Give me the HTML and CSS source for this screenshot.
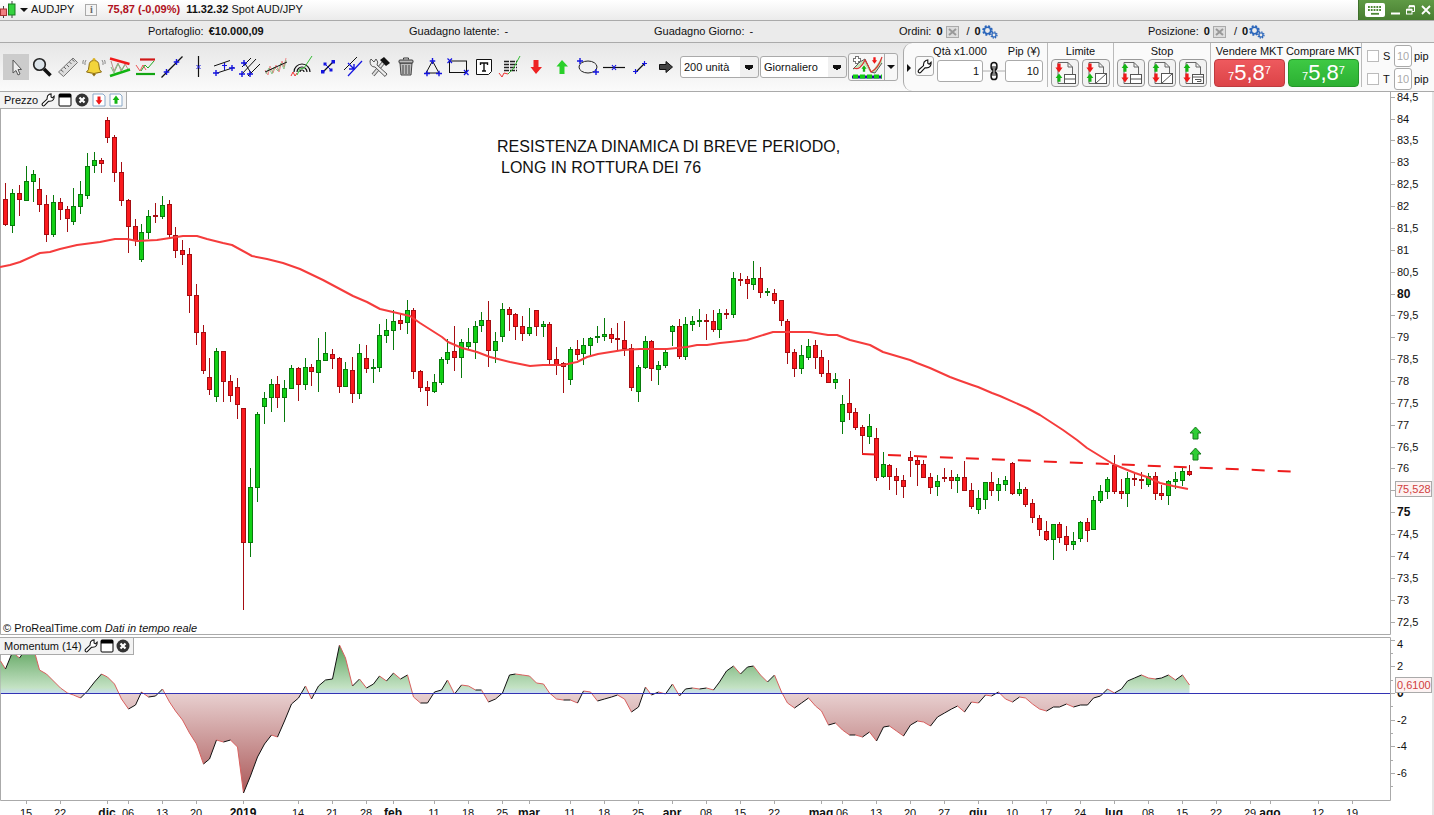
FILE: index.html
```html
<!DOCTYPE html>
<html lang="it">
<head>
<meta charset="utf-8">
<title>AUDJPY - Spot AUD/JPY</title>
<link rel="stylesheet" href="styles.css">
</head>
<body>
<svg class="defs" aria-hidden="true">
  <symbol id="wrench" viewBox="0 0 16 16"><path d="M2 14.5Q.5 13 2 11.500L7 7Q6.500 3 9.500 1.500L11.500 1V4.500L13 5.500L15 3.500Q15.500 9 10 9.500L8.500 9.500L4 14.200Q3 15.200 2 14.500Z" fill="#fff" stroke="#111" stroke-width="1.200"/></symbol>
  <symbol id="window" viewBox="0 0 14 14"><rect x="1" y="1" width="12" height="12" rx="1" fill="#fff" stroke="#000"/><path d="M1 1H13V4.500H1Z"/></symbol>
  <symbol id="close" viewBox="0 0 14 14"><circle cx="7" cy="7" r="6.500" fill="#333"/><path d="M4.500 4.500L9.500 9.500M9.500 4.500L4.500 9.500" stroke="#fff" stroke-width="2.200"/></symbol>
  <symbol id="gears" viewBox="0 0 16 14"><circle cx="5.500" cy="5.500" r="4.300" fill="none" stroke="#2b66bb" stroke-width="2" stroke-dasharray="1.900 1.500"/><circle cx="5.500" cy="5.500" r="3.200" fill="none" stroke="#2b66bb" stroke-width="1.600"/><circle cx="12" cy="10" r="3" fill="none" stroke="#2b66bb" stroke-width="1.300" stroke-dasharray="1.300 1.050"/><circle cx="12" cy="10" r="2" fill="none" stroke="#2b66bb" stroke-width="1.200"/></symbol>
  <symbol id="cancel" viewBox="0 0 13 12"><rect x=".5" y=".5" width="12" height="11" fill="#ddd" stroke="#aaa"/><path d="M3 3L10 9M10 3L3 9" stroke="#999" stroke-width="2"/></symbol>
  <symbol id="red-down" viewBox="0 0 10 12"><path d="M3 .5H7V5.500H9.500L5 11.500L.5 5.500H3Z" fill="#f01818"/></symbol>
  <symbol id="green-up" viewBox="0 0 10 12"><path d="M3 11.500H7V6.500H9.500L5 .5L.5 6.500H3Z" fill="#13b513"/></symbol>
  <symbol id="plus" viewBox="0 0 6 6"><path d="M3 0V6M0 3H6" stroke="#1414e0" stroke-width="1.400"/></symbol>
  <symbol id="page" viewBox="0 0 24 24"><path d="M5 1.500H15L19.500 6V22.500H5Z" fill="#f6f6f6" stroke="#666"/><path d="M15 1.500V6H19.500" fill="none" stroke="#666"/></symbol>
</svg>

<header class="titlebar">
  <svg class="logo" viewBox="0 0 17 20"><path d="M3.500 6V18M12 1V18" stroke="#444"/><rect x=".5" y="9" width="6" height="6.500" fill="#f08080" stroke="#a33"/><rect x="8.500" y="4" width="6.500" height="11" fill="#35d23f" stroke="#187a20"/></svg>
  <button class="caret" aria-label="Scegli strumento"></button>
  <span class="symbol">AUDJPY</span>
  <button class="info" aria-label="Informazioni">i</button>
  <b class="quote">75,87 (-0,09%)</b>
  <b class="clock">11.32.32</b>
  <span>Spot AUD/JPY</span>
  <div class="window-controls">
    <button aria-label="Tastiera"><svg width="20" height="14" viewBox="0 0 20 14"><rect width="20" height="14" rx="2" fill="#fff"/><path d="M3 4H17M3 7H17" stroke="#4e8735" stroke-width="1.800" stroke-dasharray="1.800 1"/><path d="M6 10.800H14" stroke="#4e8735" stroke-width="1.800"/></svg></button>
    <button aria-label="Riduci"><svg width="9" height="10" viewBox="0 0 9 10"><path d="M0 8.500H9" stroke="#fff" stroke-width="2"/></svg></button>
    <button aria-label="Ripristina"><svg width="9" height="10" viewBox="0 0 9 10"><path d="M3 3.500V1H8.500V6.500H6" fill="none" stroke="#fff"/><path d="M3 1.200H8.500" stroke="#fff" stroke-width="2"/><rect x=".5" y="4.500" width="5.500" height="4.500" fill="none" stroke="#fff"/><path d="M.5 4.700H6" stroke="#fff" stroke-width="2"/></svg></button>
    <button aria-label="Chiudi"><svg width="10" height="10" viewBox="0 0 10 10"><path d="M1 1L9 9M9 1L1 9" stroke="#fff" stroke-width="1.800"/></svg></button>
  </div>
</header>

<section class="status">
  <p>Portafoglio: <b>€10.000,09</b></p>
  <p>Guadagno latente: <span>-</span></p>
  <p>Guadagno Giorno: <span>-</span></p>
  <p>Ordini: <b>0</b><svg class="i-cancel"><use href="#cancel"/></svg> <span class="slash">/</span> <b>0</b><svg class="i-gears"><use href="#gears"/></svg></p>
  <p>Posizione: <b>0</b><svg class="i-cancel"><use href="#cancel"/></svg> <span class="slash">/</span> <b>0</b><svg class="i-gears"><use href="#gears"/></svg></p>
</section>

<nav class="toolbar">
  <div class="tools">
    <button class="active" aria-label="Cursore"><svg viewBox="0 0 24 24"><path d="M9 5V18L12 15.500L14 20L16 19L14 14.500H17.500Z" fill="#eee" stroke="#555"/></svg></button>
    <button aria-label="Zoom"><svg viewBox="0 0 24 24"><path d="M14 14L20.500 20.500" stroke="#111" stroke-width="3.500"/><circle cx="9.500" cy="9.500" r="5.800" fill="#dce4ea" stroke="#222" stroke-width="1.600"/></svg></button>
    <button aria-label="Righello"><svg viewBox="0 0 24 24"><path d="M2.500 17L17 3L21.500 7.500L7.500 21.500Z" fill="#ddd" stroke="#777"/><path d="M5 15L7.500 17M8 12L10 14M10.500 9.500L13 12M13.500 7L15.500 9M16 4.500L18.500 6.500" stroke="#666"/></svg></button>
    <button aria-label="Allarme"><svg viewBox="0 0 24 24"><path d="M4.500 17Q7 15.500 7 11Q7 5.500 12 5.500T17 11Q17 15.500 19.500 17Q12 20 4.500 17Z" fill="#f3d43a" stroke="#8a6a10"/><circle cx="12" cy="4.500" r="1.500" fill="#d9b020"/><path d="M10 19H14L12 21.500Z" fill="#8a6a10"/><path d="M4 5Q2.500 7 3 10M1.500 5Q.5 7 1 9M20 5Q21.500 7 21 10M22.500 5Q23.500 7 23 9" fill="none" stroke="#888"/></svg></button>
    <button aria-label="Triangoli"><svg viewBox="0 0 24 24"><path d="M3 6L6 16L10 8L13 16L17 9L20 14" fill="none" stroke="#b88"/><path d="M3 12L6 18L10 9L14 15L17 10" fill="none" stroke="#7b7"/><path d="M2 3.500L21.500 9" stroke="#f01818" stroke-width="2.400"/><path d="M2 21L22 14.500" stroke="#12b512" stroke-width="2.400"/></svg></button>
    <button aria-label="Supporti e resistenze"><svg viewBox="0 0 24 24"><path d="M2 10L6 16L9 10L12 15" fill="none" stroke="#e55"/><path d="M7 16L11 10L14 13L20 6" fill="none" stroke="#2a2"/><path d="M6 4.500H21" stroke="#d01818" stroke-width="2.200"/><path d="M2 19H21" stroke="#12a512" stroke-width="2.200"/></svg></button>
    <button aria-label="Retta"><svg viewBox="0 0 24 24"><path d="M1.500 22.500L22.500 1.500" stroke="#111" stroke-width="1.200"/><use href="#plus" x="3.500" y="14" width="6" height="6"/><use href="#plus" x="13.500" y="4" width="6" height="6"/></svg></button>
    <button aria-label="Linea verticale"><svg viewBox="0 0 24 24"><path d="M12.500 1V22" stroke="#111" stroke-width="1.200"/><path d="M10.500 10L14.500 14M14.500 10L10.500 14" stroke="#1414e0"/></svg></button>
    <button aria-label="Canale"><svg viewBox="0 0 24 24"><path d="M2 11L18 5.500M5 18L22 12.500" stroke="#111"/><path d="M12.500 9V15" stroke="#1414e0"/><use href="#plus" x="1" y="15" width="6" height="6"/><use href="#plus" x="17" y="10" width="6" height="6"/><use href="#plus" x="10" y="8" width="5" height="5"/></svg></button>
    <button aria-label="Forchetta"><svg viewBox="0 0 24 24"><path d="M4 12L13 3M3 20L18 4M10 21L22 9M6 7L13 18" stroke="#111"/><use href="#plus" x="3" y="5" width="6" height="6"/><use href="#plus" x="1" y="16" width="6" height="6"/><use href="#plus" x="9" y="16" width="6" height="6"/></svg></button>
    <button aria-label="Regressione"><svg viewBox="0 0 24 24"><path d="M1 15L4 20L6 11L9 18L12 10L15 17L18 6L20 12L22 3" fill="none" stroke="#e88"/><path d="M2 19L5 13L8 19L10 12L14 16L17 8L20 14L22 5" fill="none" stroke="#7b7" stroke-width=".8"/><path d="M1 17L23 7" stroke="#111"/></svg></button>
    <button aria-label="Archi"><svg viewBox="0 0 24 24"><path d="M4 17A8 8 0 0 1 20 17M7 17A5 5 0 0 1 17 17M10 17A2 2 0 0 1 14 17" fill="none" stroke="#111" stroke-width="1.200"/><path d="M1 21L3 17L5 21L7 18" fill="none" stroke="#e33"/><path d="M7 20L10 14L14 13L22 1" fill="none" stroke="#3b3"/></svg></button>
    <button aria-label="Segmento"><svg viewBox="0 0 24 24"><path d="M7 17L17 7" stroke="#111" stroke-width="1.200"/><path d="M9 9L15 15" stroke="#1414e0"/><rect x="5" y="15" width="3.500" height="3.500" fill="#1414e0"/><rect x="15.500" y="5" width="3.500" height="3.500" fill="#1414e0"/><rect x="7.500" y="7.500" width="3" height="3" fill="#1414e0"/><rect x="13.500" y="13.500" width="3" height="3" fill="#1414e0"/></svg></button>
    <button aria-label="Parallele"><svg viewBox="0 0 24 24"><path d="M2 15L15 2" stroke="#111"/><path d="M6 21L20 6" stroke="#1414e0" stroke-width="1.200"/><path d="M6 8L12 14M12 9V14H7" fill="none" stroke="#1414e0" stroke-width="1.400"/></svg></button>
    <button aria-label="Strumenti"><svg viewBox="0 0 24 24"><path d="M5 20L16 7" stroke="#555" stroke-width="3.600"/><path d="M5 20L16 7" stroke="#ddd" stroke-width="2"/><path d="M12 5L16 2L22 8L18 11Z" fill="#111"/><path d="M3 4L6 7L8 4Q11 7 9 10L19 19L17 21.500L7 12Q2 12 2 6Z" fill="#eee" stroke="#555"/></svg></button>
    <button aria-label="Elimina"><svg viewBox="0 0 24 24"><path d="M6 8H18L17 20H7Z" fill="#bbb" stroke="#444"/><path d="M9 10V19M12 10V19M15 10V19" stroke="#444"/><rect x="5" y="5" width="14" height="3" rx="1" fill="#bbb" stroke="#333"/><path d="M9.500 4.500V3H14.500V4.500" fill="none" stroke="#333"/></svg></button>
    <button aria-label="Triangolo"><svg viewBox="0 0 24 24"><path d="M12.500 6L6 18H19Z" fill="none" stroke="#111"/><use href="#plus" x="9.500" y="3" width="6" height="6"/><use href="#plus" x="4" y="15.500" width="6" height="6"/><use href="#plus" x="16" y="15.500" width="6" height="6"/></svg></button>
    <button aria-label="Rettangolo"><svg viewBox="0 0 24 24"><rect x="3.500" y="6" width="17" height="11.500" fill="none" stroke="#111"/><path d="M1.500 3.500L6 8M6 3.500L1.500 8M18 15L22.500 20M22.500 15L18 20" stroke="#1414e0" stroke-width="1.200"/></svg></button>
    <button aria-label="Testo"><svg viewBox="0 0 24 24"><path d="M4.500 4.500H19.500V16.500L16.500 19.500H4.500Z" fill="#fff" stroke="#111"/><path d="M8.500 10V8H15.500V10M12 8V16M10 16H14" fill="none" stroke="#111" stroke-width="1.400"/></svg></button>
    <button aria-label="Annotazioni"><svg viewBox="0 0 24 24"><path d="M6 6.500H19M6 9.500H19M6 12.500H19M6 15.500H19" stroke="#222" stroke-width="1.300" stroke-dasharray="5 1"/><path d="M1 18L4 22L6 18L10 19" fill="none" stroke="#e33"/><path d="M10 19L15 14L22 1" fill="none" stroke="#3b3"/></svg></button>
    <button aria-label="Freccia rossa"><svg viewBox="0 0 24 24"><path d="M9.500 5H14.500V12H18L12 19L6.500 12H9.500Z" fill="#ee2222"/></svg></button>
    <button aria-label="Freccia verde"><svg viewBox="0 0 24 24"><path d="M9.500 19H14.500V11.500H18L12 5L6.500 11.500H9.500Z" fill="#2ad02a"/></svg></button>
    <button aria-label="Ellisse"><svg viewBox="0 0 24 24"><ellipse cx="12" cy="12" rx="9" ry="6" fill="none" stroke="#222"/><use href="#plus" x="1" y="3" width="6" height="6"/><use href="#plus" x="17" y="14" width="6" height="6"/></svg></button>
    <button aria-label="Linea orizzontale"><svg viewBox="0 0 24 24"><path d="M1 12.500H23" stroke="#111" stroke-width="1.200"/><path d="M10 10L14 15M14 10L10 15" stroke="#1414e0" stroke-width="1.200"/></svg></button>
    <button aria-label="Tratto"><svg viewBox="0 0 24 24"><path d="M8 17L17 8" stroke="#111" stroke-width="1.200"/><use href="#plus" x="5" y="14" width="5" height="5"/><use href="#plus" x="14" y="6" width="5" height="5"/></svg></button>
    <button aria-label="Avanti"><svg viewBox="0 0 24 24"><path d="M5.500 9.500H12V6.500L18.500 12L12 17.500V14.500H5.500Z" fill="#444" stroke="#111"/></svg></button>
  </div>
  <div class="pickers">
    <select class="units" aria-label="Numero di unità"><option>200 unità</option></select>
    <select class="period" aria-label="Periodo"><option>Giornaliero</option></select>
    <div class="indicator">
      <button aria-label="Indicatori"><svg width="32" height="24" viewBox="0 0 32 24"><path d="M2 14L8 9L14 4L21 17L31 2V8L24 17L19 17L13 9L2 15Z" fill="#bde8b5"/><path d="M2 14L9 7L14 4L20 17L24 18L31 8" fill="none" stroke="#555"/><path d="M3 13Q9 16 14 5Q17 10 20 17Q27 14 31 2" fill="none" stroke="#d33" stroke-width="1.200"/><path d="M6 1V9M2 5H10" stroke="#777" stroke-width="4"/><path d="M6 2V8M3 5H9" stroke="#fff" stroke-width="2"/><use href="#red-down" x="20" y="2" width="7" height="7"/><use href="#green-up" x="10" y="10" width="6" height="7"/><path d="M1 22H31" stroke="#22109a" stroke-width="3"/><path d="M2 21.500H31" stroke="#1c1" stroke-width="4" stroke-dasharray="5 2"/></svg></button>
      <button class="drop" aria-label="Altri indicatori"></button>
    </div>
  </div>
  <div class="trade">
    <span class="expand"></span>
    <button class="square" aria-label="Impostazioni"><svg width="15" height="15"><use href="#wrench"/></svg></button>
    <div class="group"><label for="qty">Qtà x1.000</label><input id="qty" class="qty" value="1"></div>
    <svg class="chain" viewBox="0 0 23 20"><path d="M0 10H23" stroke="#aaa"/><rect x="8.500" y="1" width="6" height="8" rx="3" fill="none" stroke="#111" stroke-width="1.600"/><rect x="8.500" y="11" width="6" height="8" rx="3" fill="none" stroke="#111" stroke-width="1.600"/><path d="M11.500 5V15" stroke="#111" stroke-width="3.400"/><path d="M11.500 5V15" stroke="#fff"/></svg>
    <div class="group pips"><label for="pip">Pip (¥)</label><input id="pip" class="pip" value="10"></div>
    <div class="group orders"><span>Limite</span><div class="row">
      <button aria-label="Limite 1"><svg viewBox="0 0 24 24"><use href="#page"/><use href="#red-down" x="2" y="2" width="8" height="10"/><use href="#green-up" x="2" y="12" width="8" height="9"/><rect x="11.500" y="13.500" width="11" height="9" fill="#fff" stroke="#555"/><path d="M11.500 18H22.500" stroke="#555"/></svg></button>
      <button aria-label="Limite 2"><svg viewBox="0 0 24 24"><use href="#page"/><use href="#red-down" x="2" y="2" width="8" height="10"/><use href="#green-up" x="2" y="12" width="8" height="9"/><rect x="11.500" y="12.500" width="11" height="10" fill="#fff" stroke="#555"/><path d="M11.500 22.500L22.500 12.500" stroke="#555"/></svg></button></div></div>
    <div class="group orders"><span>Stop</span><div class="row">
      <button aria-label="Stop 1"><svg viewBox="0 0 24 24"><use href="#page"/><use href="#green-up" x="2" y="2" width="8" height="9"/><use href="#red-down" x="2" y="12" width="8" height="10"/><rect x="11.500" y="13.500" width="11" height="9" fill="#fff" stroke="#555"/><path d="M11.500 18H22.500" stroke="#555"/></svg></button>
      <button aria-label="Stop 2"><svg viewBox="0 0 24 24"><use href="#page"/><use href="#green-up" x="2" y="2" width="8" height="9"/><use href="#red-down" x="2" y="12" width="8" height="10"/><rect x="11.500" y="12.500" width="11" height="10" fill="#fff" stroke="#555"/><path d="M11.500 22.500L22.500 12.500" stroke="#555"/></svg></button>
      <button aria-label="Stop 3"><svg viewBox="0 0 24 24"><use href="#page"/><use href="#green-up" x="2" y="2" width="8" height="9"/><use href="#red-down" x="2" y="12" width="8" height="10"/><rect x="11.500" y="13.500" width="11" height="9" fill="#fff" stroke="#555"/><path d="M11.500 16H22.500M14 18.500H20V20.500H16" fill="none" stroke="#555"/></svg></button></div></div>
    <div class="group market">
      <div><span>Vendere MKT</span><button class="sell"><small class="low">7</small>5,8<small>7</small></button></div>
      <div><span>Comprare MKT</span><button class="buy"><small class="low">7</small>5,8<small>7</small></button></div>
    </div>
    <div class="protect">
      <div><label><input type="checkbox">S</label><input value="10" aria-label="Pip stop"><span>pip</span></div>
      <div><label><input type="checkbox">T</label><input value="10" aria-label="Pip target"><span>pip</span></div>
    </div>
  </div>
</nav>

<main class="charts">
  <section class="panel">
    <div class="panel-head"><span>Prezzo</span>
      <button aria-label="Impostazioni prezzo"><svg><use href="#wrench"/></svg></button>
      <button aria-label="Finestra"><svg><use href="#window"/></svg></button>
      <button aria-label="Chiudi prezzo"><svg><use href="#close"/></svg></button>
      <button aria-label="Vendi"><svg viewBox="0 0 14 14"><path d="M1 1H11L13 3V13H1Z" fill="#fff" stroke="#89a8c8"/><use href="#red-down" x="3" y="3" width="8" height="9"/></svg></button>
      <button aria-label="Compra"><svg viewBox="0 0 14 14"><path d="M1 1H11L13 3V13H1Z" fill="#fff" stroke="#89a8c8"/><use href="#green-up" x="3" y="2" width="8" height="9"/></svg></button>
    </div>
    <svg class="plot" id="price" viewBox="0 92 1434 543"></svg>
  </section>
  <section class="panel">
    <div class="panel-head low-head"><span>Momentum (14)</span>
      <button aria-label="Impostazioni momentum"><svg><use href="#wrench"/></svg></button>
      <button aria-label="Finestra momentum"><svg><use href="#window"/></svg></button>
      <button aria-label="Chiudi momentum"><svg><use href="#close"/></svg></button>
    </div>
    <svg class="plot" id="momentum" viewBox="0 635 1434 166"></svg>
  </section>
  <svg class="plot" id="time" viewBox="0 801 1434 14"></svg>
</main>
<script src="charts.js"></script>
</body>
</html>
```
FILE: styles.css
```css
* { box-sizing: border-box; }
body {
  margin: 0;
  min-height: 100vh;
  overflow-x: hidden;
  background: #fff;
  color: #111;
  font: 11px/13px "Liberation Sans", Arial, sans-serif;
}
button, input, select { font: inherit; color: inherit; }
button { padding: 0; border: 0; background: none; }
p { margin: 0; }
svg { display: block; }
.defs { position: absolute; width: 0; height: 0; }

.titlebar {
  display: flex;
  align-items: center;
  height: 21px;
  padding-bottom: 1px;
  border-bottom: 1px solid #aaa;
  background: linear-gradient(#fff, #ebebeb);
}
.logo { width: 17px; height: 20px; }
.caret, .drop { display: flex; align-items: center; justify-content: center; }
.caret { width: 14px; }
.caret::before, .drop::before {
  content: "";
  border: 4px solid transparent;
  border-top: 4px solid #111;
  border-bottom: 0;
}
.info {
  width: 12px;
  height: 12px;
  margin: 0 10px 0 11px;
  border: 1px solid #aaa;
  background: #f4f4f4;
  color: #666;
  font: bold 10px/10px "Liberation Serif", serif;
}
.quote { color: #b01020; margin-right: 6px; }
.clock { margin-right: 3px; }
.window-controls {
  display: flex;
  align-items: center;
  align-self: stretch;
  gap: 6px;
  margin: 0 0 -1px auto;
  padding: 0 3px 0 6px;
  border-left: 1px solid #3f6f2b;
  background: linear-gradient(#5f9a45, #477d30);
}

.status {
  display: grid;
  grid-template-columns: 261fr 245fr 245fr 249fr 286fr;
  align-items: center;
  height: 22px;
  padding-left: 148px;
  border-bottom: 1px solid #aaa;
  background: #ebebeb;
}
.status p { display: flex; align-items: center; gap: 5px; white-space: nowrap; }
.i-cancel { width: 13px; height: 12px; margin-left: -2px; }
.i-gears { width: 16px; height: 14px; margin-left: -4px; }
.slash { margin-left: 3px; }

.toolbar {
  display: flex;
  align-items: center;
  height: 49px;
  padding-left: 3px;
  border-bottom: 1px solid #aaa;
  background: linear-gradient(#e6e6e6, #fbfbfb);
}
.tools { display: flex; }
.tools button {
  display: flex;
  align-items: center;
  justify-content: center;
  width: 26px;
  height: 26px;
}
.tools svg { width: 24px; height: 24px; }
.tools .active { background: #ccc; }
.pickers { display: flex; align-items: center; gap: 1px; padding-left: 1px; }
select {
  appearance: none;
  height: 22px;
  padding: 0 3px;
  border: 1px solid #aaa;
  border-radius: 3px;
  background:
    conic-gradient(from 300deg at 50% 100%, #111 120deg, transparent 0) right 5px center / 8px 5px no-repeat,
    linear-gradient(#f0f0f0, #f0f0f0) right center / 18px 100% no-repeat,
    #fff;
}
.units { width: 79px; }
.period { width: 87px; }
.indicator {
  display: flex;
  height: 28px;
  border: 1px solid #aaa;
  border-radius: 3px;
  background: #f7f7f7;
}
.indicator button { width: 35px; display: flex; align-items: center; justify-content: center; }
.indicator .drop { width: 13px; border-left: 1px solid #aaa; }

.trade {
  display: flex;
  flex: 1;
  align-items: flex-start;
  align-self: stretch;
  margin-left: 5px;
  padding-left: 3px;
  border-left: 1px solid #aaa;
  border-radius: 9px 0 0 9px;
  background: #fafafa;
  white-space: nowrap;
}
.expand {
  margin: 21px 4px 0 0;
  border: 4px solid transparent;
  border-left-color: #111;
  border-right: 0;
}
.square {
  display: flex;
  align-items: center;
  justify-content: center;
  width: 19px;
  height: 20px;
  margin: 13px 3px 0 0;
  border: 1px solid #aaa;
  border-radius: 3px;
}
.group { display: flex; flex-direction: column; padding-top: 2px; text-align: center; }
.group label { display: flex; justify-content: center; width: 0; min-width: 100%; margin-bottom: 2px; }
.group input, .protect input:not([type]) {
  height: 22px;
  padding: 0 3px;
  border: 1px solid #aaa;
  border-radius: 3px;
  background: #fff;
  text-align: right;
}
.group .qty { width: 46px; }
.group .pip { width: 38px; }
.chain { width: 22px; height: 20px; margin-top: 18px; }
.pips { margin-right: 4px; }
.orders { height: 44px; padding: 2px 3px 0; border-left: 1px solid #bbb; }
.row { display: flex; gap: 3px; }
.row button {
  display: flex;
  align-items: center;
  justify-content: center;
  width: 28px;
  height: 28px;
  margin-top: 1px;
  border: 1px solid #999;
  border-radius: 4px;
  background: #f2f2f2;
}
.row svg { width: 24px; height: 24px; }
.market {
  flex-direction: row;
  gap: 3px;
  height: 44px;
  padding: 2px 2px 0 3px;
  border: solid #bbb;
  border-width: 0 1px;
}
.market > div { display: flex; flex-direction: column; align-items: center; width: 71px; }
.sell, .buy {
  display: flex;
  align-items: center;
  justify-content: center;
  flex: none;
  width: 71px;
  height: 28px;
  margin-top: 1px;
  border-radius: 4px;
  color: #fff;
  font-size: 22px;
  line-height: 28px;
}
.sell { border: 1px solid #bd3b3f; background: linear-gradient(#ee5a5e, #dc4347); }
.buy { border: 1px solid #25962a; background: linear-gradient(#3ec944, #2cb032); }
.market small { font-size: 11px; line-height: 12px; align-self: flex-start; margin-top: 4px; }
.market .low { align-self: flex-end; margin: 0 0 4px; }
.protect { display: grid; gap: 1px; padding: 2px 0 0 5px; }
.protect > div { display: flex; align-items: center; gap: 2px; }
.protect label { display: flex; align-items: center; gap: 4px; width: 25px; }
.protect [type="checkbox"] {
  appearance: none;
  width: 12px;
  height: 12px;
  margin: 0;
  border: 1px solid #bbb;
  background: #fff;
}
.protect input:not([type]) { width: 18px; padding: 0 2px; color: #aaa; }

.panel { position: relative; }
.plot { width: 100%; height: auto; overflow: hidden; }
.panel-head {
  position: absolute;
  top: 0;
  left: 0;
  display: flex;
  align-items: center;
  gap: 3px;
  height: 17px;
  padding: 0 3px 0 4px;
  border: solid #aaa;
  border-width: 0 1px 1px 0;
  background: #f3f3f3;
}
.low-head { top: 3px; gap: 2px; }
.panel-head svg { width: 14px; height: 14px; }

.plot text { font-size: 11px; fill: #111; }
.plot .major { font-size: 12px; font-weight: bold; }
.plot .center { text-anchor: middle; }
.plot .note { font-size: 16px; }
.plot .italic { font-style: italic; }
.plot .tag-text { fill: #d04040; }
.tag { fill: #fdf3f3; stroke: #aaa; }
.frame { fill: none; stroke: #aaa; }
.edge { fill: #e6e6e6; }
.average { fill: none; stroke: #f53c3c; stroke-width: 2; stroke-linejoin: round; }
.trend { stroke: #ee1c1c; stroke-width: 2; stroke-dasharray: 13 13; }
.up { fill: #12d016; stroke: #087a0c; }
.down { fill: #fb1a1e; stroke: #a50d12; }
.marker { fill: #2fce35; stroke: #157a1a; }
.rise, .fall { fill: none; stroke: #111; stroke-width: 1; }
.fall { stroke: #d9605f; }
.zero { stroke: #3333b4; stroke-width: 1; }
```
FILE: charts.js
```js
// Each candle: high, body top, body bottom, low, direction (r = down, g = up), in chart units.
const candles = `183,199,225,226,r 189,193,226,233,g 185,193,200,216,r 166,181,201,201,g 170,174,182,202,g 178,189,205,212,r 195,204,235,242,r 195,202,235,237,g 198,202,210,220,r 206,209,219,232,r
188,206,222,225,g 181,194,207,214,g 153,166,196,199,g 152,160,166,173,g 158,160,164,173,r 117,120,138,143,r 135,137,173,182,r 162,172,201,206,r 199,200,227,253,r 219,226,241,246,r
224,232,260,262,g 210,216,233,239,g 203,215,217,223,r 196,205,217,219,g 200,204,235,238,r 227,235,251,258,r 240,250,255,265,r 248,254,296,313,r 284,295,333,345,r 325,332,371,374,r
358,377,390,395,r 348,351,397,402,g 351,351,382,402,r 375,381,396,402,r 378,387,405,419,r 408,408,543,610,r 468,487,543,557,g 412,414,488,502,g 392,398,407,424,g 379,384,398,412,g
376,384,398,408,r 380,388,398,422,g 365,368,389,389,g 367,368,385,401,r 358,367,385,390,g 364,367,372,386,r 338,360,373,392,g 332,353,361,361,g 349,354,359,369,r 357,358,387,393,r
362,369,387,387,g 357,370,394,403,r 344,353,394,399,g 345,358,369,373,r 359,367,368,383,g 324,335,368,372,g 319,330,336,343,g 310,321,331,350,g 313,320,324,330,r 300,310,323,334,g
308,310,372,379,r 370,371,388,392,r 381,387,391,406,r 374,382,392,393,g 357,359,383,385,g 339,352,360,364,g 326,351,358,371,r 339,342,358,378,g 328,342,347,350,g 321,326,343,359,g
312,320,326,332,g 301,320,351,367,r 332,341,351,363,g 303,309,337,342,g 307,309,315,331,r 313,314,327,340,r 316,326,334,341,r 308,327,334,336,g 310,310,327,336,r 321,324,327,337,g
322,324,360,364,r 347,359,365,375,r 362,363,367,393,r 347,349,380,385,g 340,349,355,360,r 338,345,354,365,g 337,338,346,355,g 326,336,338,343,g 318,334,337,341,g 328,334,339,343,r
323,338,340,350,r 321,340,349,356,r 344,348,388,391,r 365,367,392,402,g 336,341,368,369,g 340,341,369,381,r 361,365,370,385,g 350,352,366,368,g 325,326,332,346,g 319,326,357,359,r
317,324,357,360,g 316,321,325,331,g 309,320,321,327,g 314,320,322,340,r 310,321,330,332,r 309,313,330,338,g 309,313,315,319,r 272,278,315,318,g 273,279,281,286,r 276,279,284,299,r
261,278,285,290,g 267,278,293,298,r 288,291,293,296,g 289,293,301,304,r 300,300,321,326,r 319,321,353,364,r 349,352,369,377,r 345,355,369,374,g 339,346,358,360,g 340,345,358,369,r
350,357,374,377,r 360,373,383,383,r 373,379,383,389,g 395,404,422,434,g 379,403,413,420,r 408,412,428,430,r 425,427,436,454,r 414,426,437,444,g 428,438,478,481,r 452,464,477,478,g
464,465,477,490,r 468,476,481,495,r 475,480,487,498,r 451,457,461,477,r 456,460,465,486,r 460,464,478,478,r 473,477,488,494,r 475,481,487,496,g 468,477,479,482,r 470,477,481,489,r
474,477,481,493,g 461,477,491,491,r 483,490,507,509,r 490,498,510,514,g 482,482,500,509,g 472,482,491,496,r 478,484,491,501,g 476,480,485,491,g 462,463,494,495,r 482,489,494,496,g
487,489,505,507,r 499,503,518,523,r 515,518,530,536,r 521,531,540,541,r 524,524,540,560,g 522,524,538,543,r 526,536,545,551,r 532,541,545,550,g 521,522,539,542,g 518,522,531,542,r
496,500,530,530,g 485,491,501,503,g 477,479,492,499,g 455,465,492,494,r 479,491,494,499,r 472,478,494,507,g 472,478,480,486,r 472,479,481,489,r 473,476,485,487,g 472,476,494,500,r
485,493,496,500,r 480,481,496,505,g 472,479,482,489,g 468,471,481,486,g 465,471,475,476,r`.split(/\s+/).map(c => c.split(","));

const average = "0,267 10,265 20,262 40,253 50,252 60,249 77,245 100,242 115,239 127,239 137,241 157,240 183,236 197,236 207,239 223,243 232,245 252,256 267,259 283,263 300,269 323,280 353,296 367,302 380,309 410,316 420,323 442,337 448,342 462,348 477,352 490,357 510,362 530,366 543,365 563,365 577,362 587,357 598,354 623,350 640,349 667,349 687,347 697,345 707,345 720,343 730,342 747,340 773,332 810,332 828,335 837,335 850,340 870,345 883,352 910,360 917,363 930,368 950,377 958,380 972,385 978,387 992,393 1000,396 1027,408 1040,415 1063,430 1077,440 1087,448 1113,464 1125,469 1135,473 1147,477 1160,483 1173,486 1188,489";

const momentum = [661,
  669,652,658,648,648,670,674,681,688,693,695,698,691,682,674,677,684,699,709,705,692,697,696,689,702,711,720,733,744,764,
  759,740,742,740,747,793,776,757,744,735,737,721,704,698,686,699,686,680,679,645,658,686,679,688,684,676,681,673,679,675,
  697,703,703,692,690,680,694,685,686,690,690,702,699,693,675,674,675,676,683,684,693,699,700,700,703,691,692,701,699,697,
  695,699,712,707,687,695,692,694,684,696,689,688,689,688,690,682,671,666,674,667,666,675,682,675,692,703,708,703,698,706,
  711,725,723,730,735,735,737,732,741,727,726,731,736,725,721,722,726,717,713,709,706,712,702,703,695,696,692,699,702,697,
  698,704,709,711,707,707,704,707,705,705,698,696,689,693,689,681,678,675,678,679,678,675,680,675,685];

const dates = "26:15 60:22 107:dic 128:06 162:13 196:20 243:2019 298:14 332:21 366:28 393:feb 434:11 468:18 502:25 529:mar 570:11 604:18 638:25 672:apr 706:08 740:15 774:22 821:mag 842:06 876:13 910:20 944:27 978:giu 1012:10 1046:17 1080:24 1114:lug 1148:08 1182:15 1216:22 1250:29 1270:ago 1318:12 1352:19";

const slot = i => Math.ceil(5 + 6.8 * i - 0.001) + 0.5;
const edge = (y, h) => `<rect class="edge" x="1432" y="${y}" width="2" height="${h}"/>`;

function drawPrice() {
  let out = edge(92, 543) + '<path class="frame" d="M.5 92V634.500H1390.500V92"/>';
  for (let i = 0; i < 25; i++) {
    const value = 84.5 - i / 2, y = Math.round(96.7 + 21.87 * i);
    out += `<path class="frame" d="M1390 ${y + 0.5}h5"/>`;
    if (value !== 75.5) {
      out += `<text class="${value % 5 ? "" : "major"}" x="1397" y="${y + 4}">${String(value).replace(".", ",")}</text>`;
    }
  }
  out += '<rect class="tag" x="1395.500" y="481.500" width="36" height="15"/><text class="tag-text" x="1397" y="493">75,528</text>';
  candles.forEach(([hi, top, bot, lo, dir], i) => {
    const x = slot(i), h = Math.max(1, bot - top - 1);
    out += `<g class="${dir === "g" ? "up" : "down"}"><path d="M${x} ${hi}V${lo}"/><rect x="${x - 2}" y="${+top + 0.5}" width="4" height="${h}"/></g>`;
  });
  out += `<polyline class="average" points="${average}"/>`;
  out += '<path class="trend" d="M862 454L1292 471.500"/>';
  for (const y of [427, 448]) {
    out += `<path class="marker" d="M1195.500 ${y}l5.500 6h-3v6h-5v-6h-3z"/>`;
  }
  out += '<text class="note" x="497" y="152">RESISTENZA DINAMICA DI BREVE PERIODO,</text><text class="note" x="501" y="173">LONG IN ROTTURA DEI 76</text>';
  out += '<text x="3" y="632">© ProRealTime.com <tspan class="italic">Dati in tempo reale</tspan></text>';
  document.getElementById("price").innerHTML = out;
}

function drawMomentum() {
  const pts = momentum.map((y, i) => [i ? slot(i - 1) : 0.5, y]);
  const last = pts[pts.length - 1];
  const area = `M.5 693L${pts.map(p => p.join(" ")).join("L")}L${last[0]} 693Z`;
  let out = `<defs>
    <linearGradient id="gain" gradientUnits="userSpaceOnUse" x1="0" y1="640" x2="0" y2="693"><stop offset="0" stop-color="#4d9a4d"/><stop offset=".9" stop-color="#c4e2c4"/><stop offset="1" stop-color="#c8def0"/></linearGradient>
    <linearGradient id="loss" gradientUnits="userSpaceOnUse" x1="0" y1="693" x2="0" y2="797"><stop offset="0" stop-color="#e8d0d0"/><stop offset="1" stop-color="#a95555"/></linearGradient>
    <clipPath id="above"><rect x="0" y="638" width="1390" height="55"/></clipPath>
    <clipPath id="below"><rect x="0" y="693" width="1390" height="107"/></clipPath></defs>`;
  out += edge(635, 166) + '<path class="frame" d="M0 637.500H1390.500V800.500H.5V637.500"/>';
  out += `<path d="${area}" fill="url(#gain)" clip-path="url(#above)"/><path d="${area}" fill="url(#loss)" clip-path="url(#below)"/>`;
  for (let i = 1; i < pts.length; i++) {
    const [a, b] = [pts[i - 1], pts[i]];
    out += `<path class="${b[1] > a[1] ? "fall" : "rise"}" d="M${a.join(" ")}L${b.join(" ")}"/>`;
  }
  out += '<path class="zero" d="M1 693.500H1390"/>';
  for (let v = 4; v >= -7; v--) {
    const y = Math.round(693 - 13.35 * v);
    out += `<path class="frame" d="M1390 ${y + 0.5}h${v % 2 ? 3 : 5}"/>`;
    if (v % 2 === 0) {
      out += `<text class="${v ? "" : "major"}" x="1397" y="${v === 4 ? 648 : y + 4}">${v}</text>`;
    }
  }
  out += '<rect class="tag" x="1395.500" y="677.500" width="36" height="15"/><text class="tag-text" x="1397" y="689">0,6100</text>';
  document.getElementById("momentum").innerHTML = out;
}

function drawTime() {
  let out = edge(801, 14);
  for (const item of dates.split(" ")) {
    const [x, label] = item.split(":");
    const major = /[a-z]|2019/.test(label);
    out += `<path class="frame" d="M${+x + 0.5} 801v3"/><text class="center ${major ? "major" : "day"}" x="${x}" y="817">${label}</text>`;
  }
  document.getElementById("time").innerHTML = out;
}

drawPrice();
drawMomentum();
drawTime();
```
